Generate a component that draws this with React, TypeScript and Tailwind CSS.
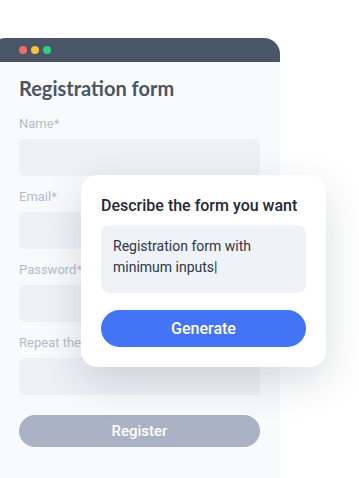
import React from "react";

function Field({ label }: { label: string }) {
  return (
    <div className="flex flex-col">
      <p className="h-[22px] text-[13px] leading-[22px] text-[#b3bccb]">{label}</p>
      <div className="mt-[4px] h-[37px] rounded-[6px] bg-[#eef1f6]" />
    </div>
  );
}

export default function App() {
  return (
    <div className="relative h-[478px] w-[359px] overflow-hidden bg-white font-['Roboto',sans-serif]">
      <div className="ml-[-10px] mt-[38px] h-[460px] w-[290px] overflow-hidden rounded-t-[16px] bg-[#f8fafc]">
        <div className="flex h-[24px] items-center gap-[4px] bg-[#4a5567] pl-[29px]">
          <span className="h-[8px] w-[8px] rounded-full bg-[#f26b6b]" />
          <span className="h-[8px] w-[8px] rounded-full bg-[#f4c33c]" />
          <span className="h-[8px] w-[8px] rounded-full bg-[#2fcf7a]" />
        </div>
        <div className="flex flex-col pl-[29px] pr-[20px]">
          <h1 className="mt-[13px] font-['Lato',sans-serif] text-[20px] font-bold leading-[26px] text-[#4a5567]">
            Registration form
          </h1>
          <div className="mt-[12px] flex flex-col gap-[10px]">
            <Field label="Name*" />
            <Field label="Email*" />
            <Field label="Password*" />
            <Field label="Repeat the password*" />
          </div>
          <button className="mt-[20px] h-[32px] rounded-full bg-[#a9b3c5] text-[15px] font-medium text-white">
            Register
          </button>
        </div>
      </div>

      <div className="absolute left-[81px] top-[175px] w-[245px] rounded-[16px] bg-white px-[20px] pb-[20px] pt-[20px] shadow-[0_14px_40px_rgba(30,41,59,0.16)]">
        <p className="text-[16px] font-medium leading-[22px] text-[#1f2937]">Describe the form you want</p>
        <div className="mt-[8px] h-[68px] rounded-[8px] bg-[#eff2f7] px-[12px] pt-[11px] text-[14px] leading-[21px] text-[#2d3748]">
          Registration form with
          <br />
          minimum inputs|
        </div>
        <button className="mt-[17px] h-[37px] w-full rounded-full bg-[#4474f6] text-[16px] font-medium text-white">
          Generate
        </button>
      </div>
    </div>
  );
}
